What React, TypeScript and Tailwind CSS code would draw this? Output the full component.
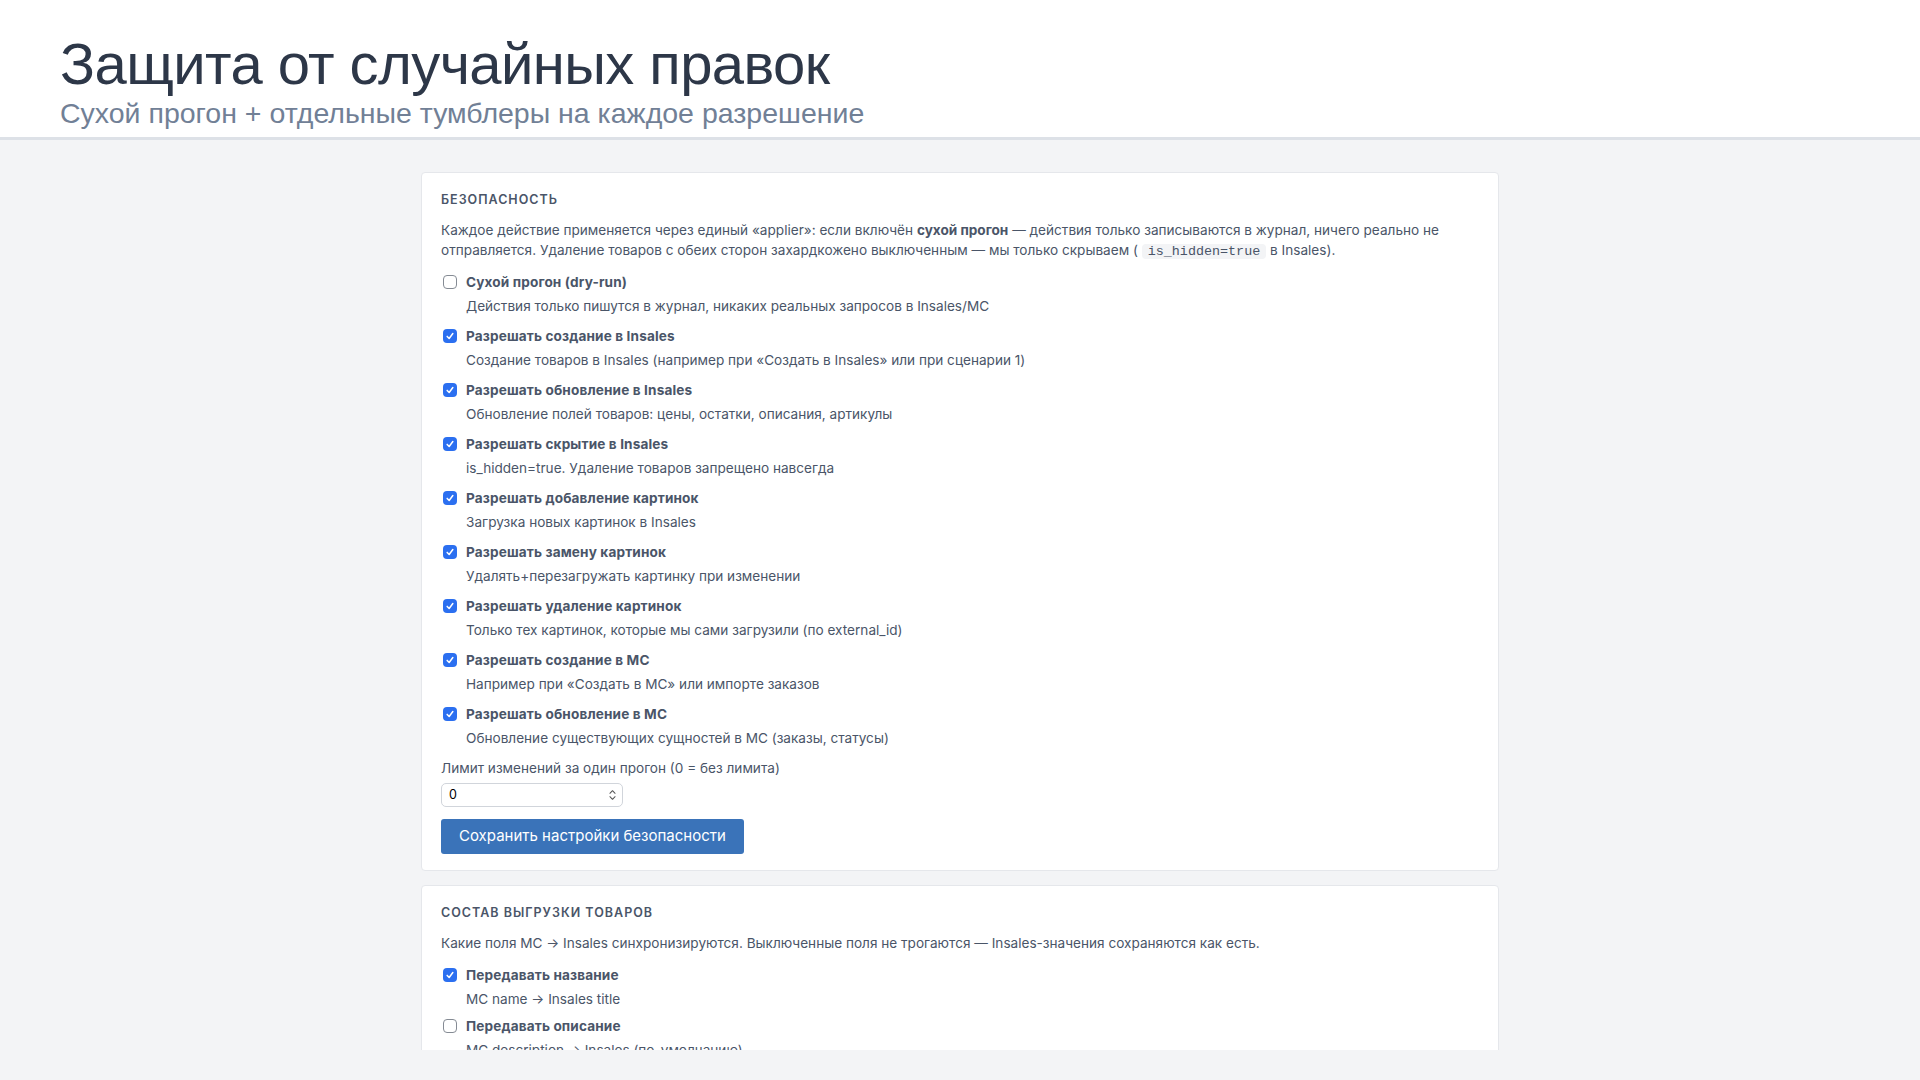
import React from 'react';

type Toggle = {
  label: string;
  hint: string;
  checked: boolean;
};

const SAFETY: Toggle[] = [
  { label: 'Сухой прогон (dry-run)', hint: 'Действия только пишутся в журнал, никаких реальных запросов в Insales/МС', checked: false },
  { label: 'Разрешать создание в Insales', hint: 'Создание товаров в Insales (например при «Создать в Insales» или при сценарии 1)', checked: true },
  { label: 'Разрешать обновление в Insales', hint: 'Обновление полей товаров: цены, остатки, описания, артикулы', checked: true },
  { label: 'Разрешать скрытие в Insales', hint: 'is_hidden=true. Удаление товаров запрещено навсегда', checked: true },
  { label: 'Разрешать добавление картинок', hint: 'Загрузка новых картинок в Insales', checked: true },
  { label: 'Разрешать замену картинок', hint: 'Удалять+перезагружать картинку при изменении', checked: true },
  { label: 'Разрешать удаление картинок', hint: 'Только тех картинок, которые мы сами загрузили (по external_id)', checked: true },
  { label: 'Разрешать создание в МС', hint: 'Например при «Создать в МС» или импорте заказов', checked: true },
  { label: 'Разрешать обновление в МС', hint: 'Обновление существующих сущностей в МС (заказы, статусы)', checked: true },
];

const EXPORT_FIELDS: Toggle[] = [
  { label: 'Передавать название', hint: 'МС name → Insales title', checked: true },
  { label: 'Передавать описание', hint: 'МС description → Insales (по-умолчанию)', checked: false },
];

function Checkbox({ checked }: { checked: boolean }) {
  if (!checked) {
    return <span className="h-[14px] w-[14px] shrink-0 rounded-[4px] border border-[#858b94] bg-white" />;
  }
  return (
    <span className="h-[14px] w-[14px] shrink-0 rounded-[4px] bg-[#2b6ff0] flex items-center justify-center">
      <svg viewBox="0 0 12 12" className="h-[10px] w-[10px]" fill="none">
        <path d="M2.6 6.5 L5 9 L9.4 3" stroke="white" strokeWidth="1.8" strokeLinecap="round" strokeLinejoin="round" />
      </svg>
    </span>
  );
}

function ToggleRow({ item }: { item: Toggle }) {
  return (
    <div>
      <label className="flex items-center gap-[9px] pl-[2px] leading-5 font-bold tracking-[0.01em] text-[#4a5568]">
        <Checkbox checked={item.checked} />
        {item.label}
      </label>
      <p className="mt-1 pl-[25px] leading-5 text-[#4a5568]">{item.hint}</p>
    </div>
  );
}

function Card({ title, children }: { title: string; children: React.ReactNode }) {
  return (
    <section className="bg-white border border-[#e5e7eb] rounded-[4px] px-[19px] pt-[19px] pb-[16px]">
      <h2 className="text-[12.5px] leading-4 font-semibold uppercase tracking-[0.08em] text-[#4a5568] mb-3">{title}</h2>
      {children}
    </section>
  );
}

export default function App() {
  return (
    <div className="h-screen flex flex-col bg-[#f3f4f6] font-[Inter,'Noto_Sans',sans-serif] text-[13.6px]">
      <header className="h-[140px] shrink-0 bg-white border-b-[3px] border-[#dde1e7] px-[60px] pt-[36px] font-['Liberation_Sans',Arial,sans-serif]">
        <h1 className="text-[58px] leading-[56px] text-[#2d3748] tracking-[-0.01em]">Защита от случайных правок</h1>
        <p className="text-[28.5px] leading-[32px] text-[#718096] mt-[5px]">Сухой прогон + отдельные тумблеры на каждое разрешение</p>
      </header>

      <main className="h-[910px] shrink-0 overflow-hidden pt-[32px]">
        <div className="w-[1078px] mx-auto flex flex-col gap-[14px]">
          <Card title="Безопасность">
            <p className="leading-5 text-[#4a5568]">
              Каждое действие применяется через единый «applier»: если включён <b className="font-bold">сухой прогон</b> — действия только записываются в журнал, ничего реально не отправляется. Удаление товаров с обеих сторон захардкожено выключенным — мы только скрываем ({' '}
              <code className="font-['Liberation_Mono',monospace] text-[13.4px] leading-4 bg-[#f3f4f6] rounded-[4px] px-[6px]">is_hidden=true</code> в Insales).
            </p>
            <div className="mt-3 flex flex-col gap-[10px]">
              {SAFETY.map((item) => (
                <ToggleRow key={item.label} item={item} />
              ))}
              <div>
                <p className="leading-5 text-[#4a5568]">Лимит изменений за один прогон (0 = без лимита)</p>
                <div className="mt-[5px] w-[182px] h-[24px] border border-[#d1d5db] rounded-[5px] flex items-center justify-between pl-[7px] pr-[5px] text-[12.5px] text-black">
                  <span>0</span>
                  <svg viewBox="0 0 10 14" className="h-[12px] w-[9px]" fill="none">
                    <path d="M2 5 L5 2 L8 5" stroke="#555" strokeWidth="1.2" strokeLinecap="round" strokeLinejoin="round" />
                    <path d="M2 9 L5 12 L8 9" stroke="#555" strokeWidth="1.2" strokeLinecap="round" strokeLinejoin="round" />
                  </svg>
                </div>
              </div>
            </div>
            <button className="mt-3 h-[35px] px-[18px] rounded-[3px] bg-[#3a73b9] text-white text-[15px]">
              Сохранить настройки безопасности
            </button>
          </Card>

          <Card title="Состав выгрузки товаров">
            <p className="leading-5 text-[#4a5568]">
              Какие поля МС → Insales синхронизируются. Выключенные поля не трогаются — Insales-значения сохраняются как есть.
            </p>
            <div className="mt-3 flex flex-col gap-[7px]">
              {EXPORT_FIELDS.map((item) => (
                <ToggleRow key={item.label} item={item} />
              ))}
            </div>
          </Card>
        </div>
      </main>
    </div>
  );
}
